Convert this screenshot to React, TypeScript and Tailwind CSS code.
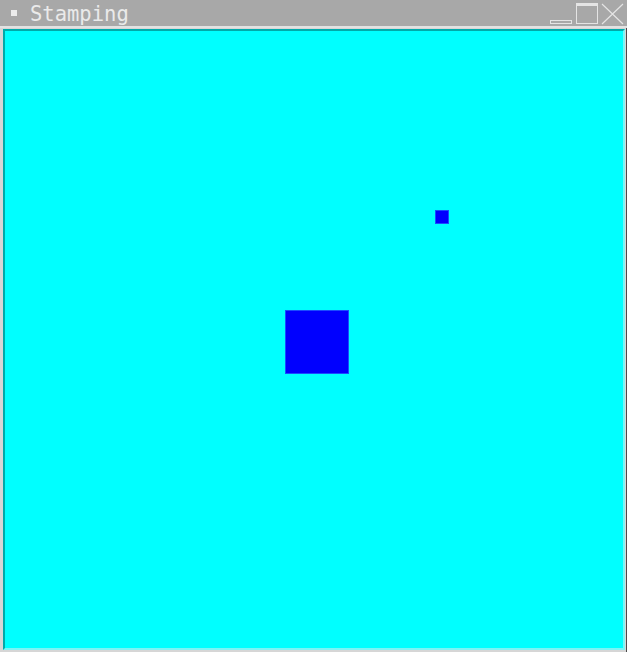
const App = () => {
  return (
    <div className="w-[627px] h-[652px] bg-[#d6d6d6] flex flex-col overflow-hidden">
      {/* Title bar */}
      <div className="h-[26px] bg-[#a8a8a8] flex items-center relative shrink-0">
        <div className="ml-[11px] w-[6px] h-[6px] bg-[#ececec]" />
        <span
          className="ml-[13px] text-[20.5px] leading-none text-[#eaeaea] mt-[2px]"
          style={{ fontFamily: '"DejaVu Sans Mono", monospace' }}
        >
          Stamping
        </span>
        <svg className="absolute right-0 top-0" width="78" height="26" viewBox="549 0 78 26">
          <rect x="550.5" y="20.5" width="21" height="3" fill="none" stroke="#e4e4e4" strokeWidth="1" />
          <rect x="576.5" y="3.5" width="21" height="20" fill="none" stroke="#e4e4e4" strokeWidth="1" />
          <rect x="577" y="4" width="20" height="2" fill="#e4e4e4" />
          <path d="M602 4 L623 24 M623 4 L602 24" stroke="#e4e4e4" strokeWidth="1.2" />
        </svg>
      </div>
      <div className="h-[2px] bg-[#e2e2e2] shrink-0" />
      {/* Frame */}
      <div className="flex-1 flex pl-[3px] pr-[1px] pt-[1px] pb-[2px] border-r border-[#4a4a4a]">
        <div className="flex-1 flex border-l-2 border-t-2 border-[#00a9a9] border-r-2 border-b-2 border-r-[#7af5f5] border-b-[#7af5f5]">
          <div className="flex-1 bg-[#00ffff] relative">
            <div className="absolute left-[430px] top-[179px] w-[14px] h-[14px] bg-[#0000ff] border border-[#1a4cff]" />
            <div className="absolute left-[280px] top-[279px] w-[64px] h-[64px] bg-[#0000ff] border border-[#1a4cff]" />
          </div>
        </div>
      </div>
    </div>
  );
};

export default App;
